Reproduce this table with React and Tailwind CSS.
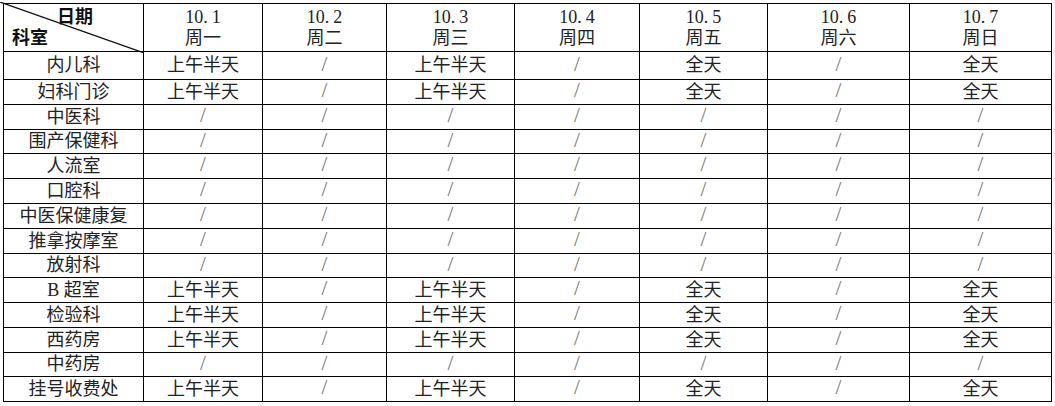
const days = [
  { d: "10", n: "1", w: "周一" },
  { d: "10", n: "2", w: "周二" },
  { d: "10", n: "3", w: "周三" },
  { d: "10", n: "4", w: "周四" },
  { d: "10", n: "5", w: "周五" },
  { d: "10", n: "6", w: "周六" },
  { d: "10", n: "7", w: "周日" },
];

const open = ["上午半天", "/", "上午半天", "/", "全天", "/", "全天"];
const closed = ["/", "/", "/", "/", "/", "/", "/"];

const rows = [
  ["内儿科", open],
  ["妇科门诊", open],
  ["中医科", closed],
  ["围产保健科", closed],
  ["人流室", closed],
  ["口腔科", closed],
  ["中医保健康复", closed],
  ["推拿按摩室", closed],
  ["放射科", closed],
  ["B 超室", open],
  ["检验科", open],
  ["西药房", open],
  ["中药房", closed],
  ["挂号收费处", open],
];

function Cell({ children }) {
  return (
    <div className="border-r border-b border-black flex items-center justify-center whitespace-nowrap">
      {children}
    </div>
  );
}

export default function App() {
  return (
    <div className="w-[1055px] h-[406px] bg-white pt-[3px] pl-[3px] overflow-hidden">
      <div
        className="grid grid-cols-[140px_119px_124px_128px_125px_128px_142px_142px] grid-rows-[48px_28px_25px_25px_24px_25px_25px_25px_25px_24px_25px_25px_25px_24px_25px] w-max border-l border-t border-black text-[18px] text-[#222]"
        style={{ fontFamily: '"Liberation Serif", "Noto Sans CJK SC", serif' }}
      >
        {/* 表头斜线单元格 */}
        <div className="relative border-r border-b border-black flex flex-col justify-center font-bold leading-[21px] text-[#111]">
          <svg className="absolute -left-[4px] -top-[2px] w-[144px] h-[51px]" viewBox="0 0 144 51">
            <line x1="0" y1="0" x2="144" y2="51" stroke="#111" strokeWidth="1.2" />
          </svg>
          <span className="ml-[53px]">日期</span>
          <span className="ml-[8px]">科室</span>
        </div>
        {days.map((day) => (
          <div
            key={day.n}
            className="border-r border-b border-black flex flex-col items-center justify-center leading-[21px]"
          >
            <span>
              {day.d}.<span className="ml-[4px]">{day.n}</span>
            </span>
            <span>{day.w}</span>
          </div>
        ))}

        {rows.map(([name, vals]) => (
          <React.Fragment key={name}>
            <Cell>{name}</Cell>
            {vals.map((v, i) => (
              <Cell key={i}>
                {v === "/" ? (
                  <span className="text-[#777] text-[21px] leading-none -mt-[3px]">/</span>
                ) : (
                  v
                )}
              </Cell>
            ))}
          </React.Fragment>
        ))}
      </div>
    </div>
  );
}

import React from "react";
